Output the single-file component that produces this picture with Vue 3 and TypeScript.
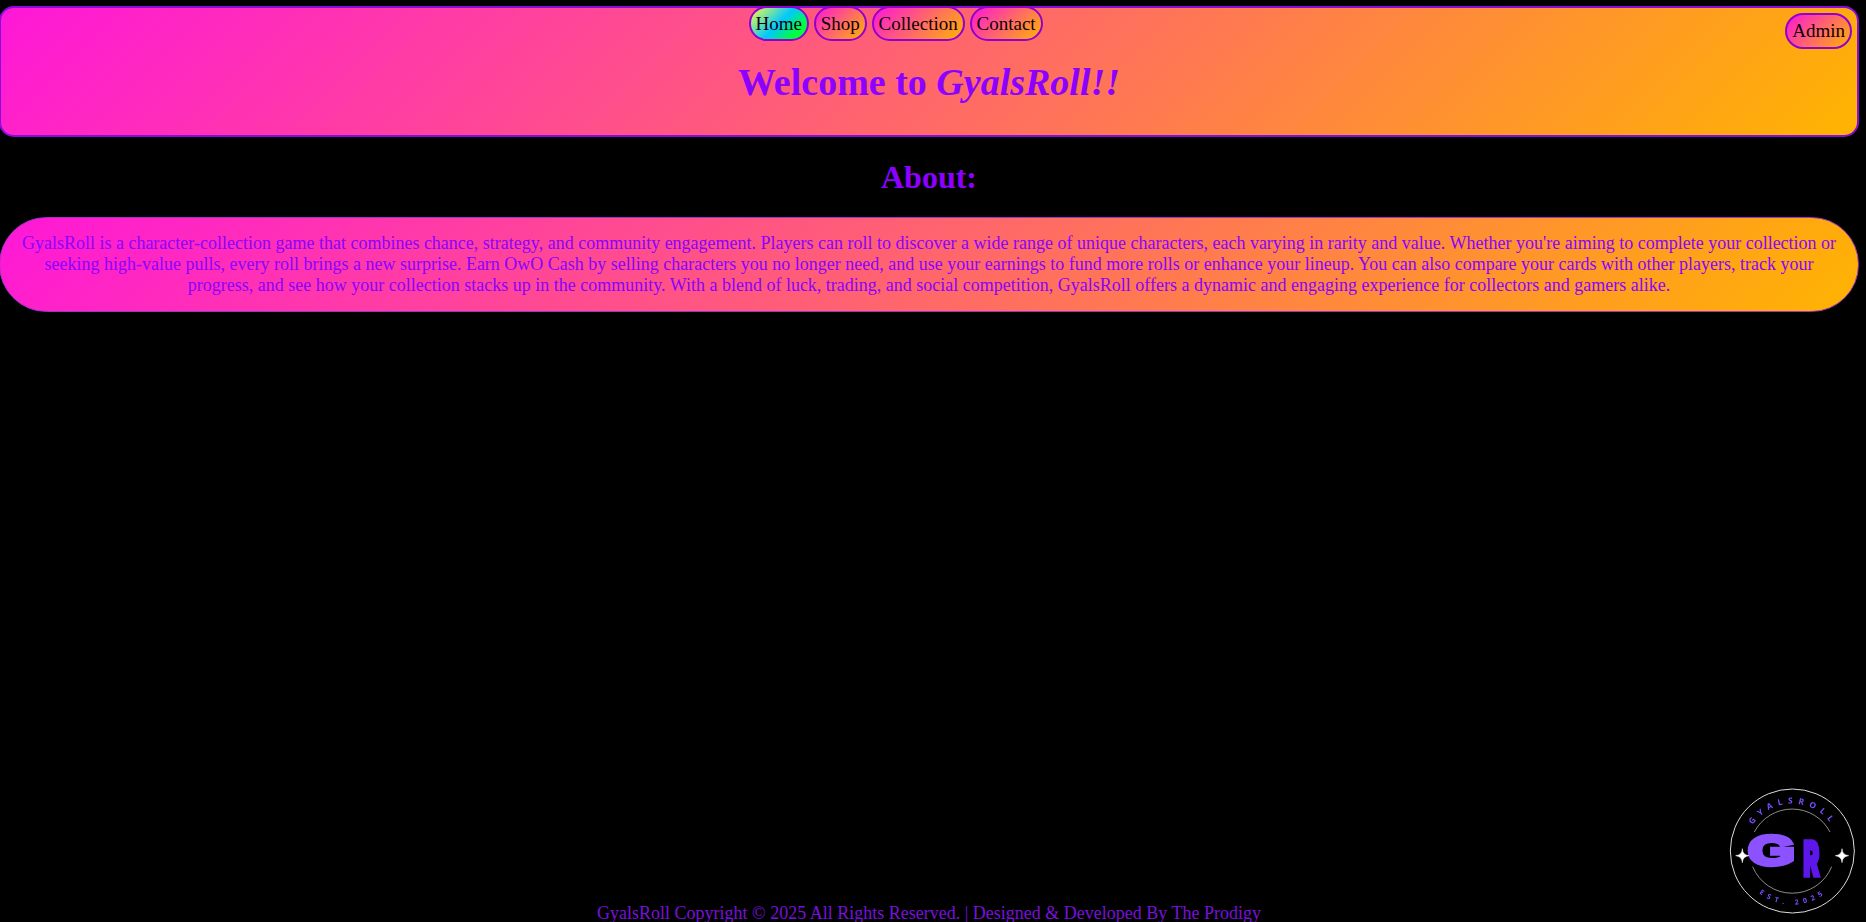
<script setup lang="ts">
interface NavLink {
  label: string
  active: boolean
}

const links: NavLink[] = [
  { label: 'Home', active: true },
  { label: 'Shop', active: false },
  { label: 'Collection', active: false },
  { label: 'Contact', active: false },
]
</script>

<template>
  <div class="page">
    <header class="banner">
      <div class="bar">
        <nav class="nav">
          <a v-for="link in links" :key="link.label" class="pill" :class="{ active: link.active }">{{ link.label }}</a>
        </nav>
        <a class="pill admin">Admin</a>
      </div>
      <h1 class="title">Welcome to <em>GyalsRoll!!</em></h1>
    </header>

    <main class="about">
      <h2 class="heading">About:</h2>
      <p class="blurb">
        GyalsRoll is a character-collection game that combines chance, strategy, and community engagement. Players can
        roll to discover a wide range of unique characters, each varying in rarity and value. Whether you're aiming to
        complete your collection or seeking high-value pulls, every roll brings a new surprise. Earn OwO Cash by selling
        characters you no longer need, and use your earnings to fund more rolls or enhance your lineup. You can also
        compare your cards with other players, track your progress, and see how your collection stacks up in the
        community. With a blend of luck, trading, and social competition, GyalsRoll offers a dynamic and engaging
        experience for collectors and gamers alike.
      </p>
    </main>

    <footer class="footer">GyalsRoll Copyright © 2025 All Rights Reserved. | Designed &amp; Developed By The Prodigy</footer>

    <svg class="logo" viewBox="0 0 450 426" role="img" aria-label="GyalsRoll logo">
      <defs>
        <path id="arc-top" d="M87 213 A142 142 0 0 1 371 213" />
        <path id="arc-bottom" d="M68 213 A161 161 0 0 0 390 213" />
      </defs>
      <circle class="ring" cx="229" cy="213" r="186" />
      <path class="arc" d="M115 156 A128 128 0 0 1 342 156" />
      <path class="arc" d="M110 260 A128 128 0 0 0 347 260" />
      <text class="round top"><textPath href="#arc-top" startOffset="50.5%">GYALSROLL</textPath></text>
      <text class="round bottom"><textPath href="#arc-bottom" startOffset="50.5%">EST. 2025</textPath></text>
      <text class="big-g" transform="translate(97 255) scale(1.4 1)">G</text>
      <text class="big-r" transform="translate(262 288) scale(0.5 1)">R</text>
      <path class="star" d="M79 206 Q80 225 99 227 Q80 229 79 248 Q78 229 59 227 Q78 225 79 206Z" />
      <path class="star" d="M378 206 Q379 225 398 227 Q379 229 378 248 Q377 229 358 227 Q377 225 378 206Z" />
    </svg>
  </div>
</template>

<style>
body {
  background: #000;
  overflow: hidden;
}
</style>

<style scoped>
.page {
  box-sizing: border-box;
  display: flex;
  flex-direction: column;
  width: 1860px;
  height: 922px;
  margin-left: -1px;
  padding-top: 6px;
  overflow: hidden;
  background: #000;
  color: #8c00ff;
  font-family: "Liberation Serif", "Times New Roman", serif;
  font-size: 19px;
  text-align: center;
}

.banner {
  box-sizing: border-box;
  height: 131px;
  border: 2px solid #8a0be0;
  border-radius: 15px;
  background: linear-gradient(135deg, #ff17d8, #ffb400);
}

.bar {
  display: flex;
  height: 44px;
  padding-right: 5px;
}

.nav {
  display: flex;
  flex: 1;
  justify-content: center;
  align-items: flex-start;
  gap: 4.75px;
  margin-top: -2px;
  padding-left: 5px;
}

.pill {
  box-sizing: border-box;
  height: 35px;
  padding: 4px 5px;
  border: 2px solid #9200d0;
  border-radius: 20px;
  background: linear-gradient(135deg, #ff17d8, #ffb400);
  color: #100008;
  line-height: 24px;
}

.pill.active {
  background: linear-gradient(135deg, #ffff3c, #00c8ff 50%, #00ff3c 80%);
}

.admin {
  align-self: flex-start;
  height: 36px;
  margin-top: 5px;
}

.title {
  margin: 8px 0 0;
  font-size: 38px;
  line-height: 44px;
}

.heading {
  margin: 22px 0 0;
  font-size: 32px;
  line-height: 37px;
}

.blurb {
  box-sizing: border-box;
  height: 95px;
  margin: 21px 0 0;
  padding: 15px 20px;
  border: 1px solid #a032c8;
  border-radius: 50px;
  background: linear-gradient(135deg, #ff17d8, #ffb400);
  font-size: 18px;
  line-height: 21px;
}

.footer {
  height: 19px;
  margin-top: auto;
  color: #7a10dc;
  font-size: 18px;
  line-height: 21px;
}

.logo {
  position: fixed;
  right: 0;
  bottom: 0;
  width: 150px;
  height: 142px;
}

.ring {
  fill: none;
  stroke: #dddcd8;
  stroke-width: 3;
}

.arc {
  fill: none;
  stroke: #aaa89c;
  stroke-width: 2.5;
}

.round {
  fill: #7c4dff;
  font-family: "Noto Sans", sans-serif;
  font-size: 25px;
  font-weight: 700;
  text-anchor: middle;
}

.top {
  letter-spacing: 16px;
}

.bottom {
  letter-spacing: 14px;
  font-size: 21px;
}

.big-g {
  fill: #8c52ff;
  stroke: #8c52ff;
  stroke-width: 13;
  font-family: "Liberation Sans", sans-serif;
  font-size: 128px;
  font-weight: 700;
}

.big-r {
  fill: #5e17eb;
  stroke: #5e17eb;
  stroke-width: 11;
  font-family: Inter, sans-serif;
  font-size: 146px;
  font-weight: 900;
}

.star {
  fill: #fff;
  stroke: #fff;
  stroke-width: 1.5;
}
</style>
